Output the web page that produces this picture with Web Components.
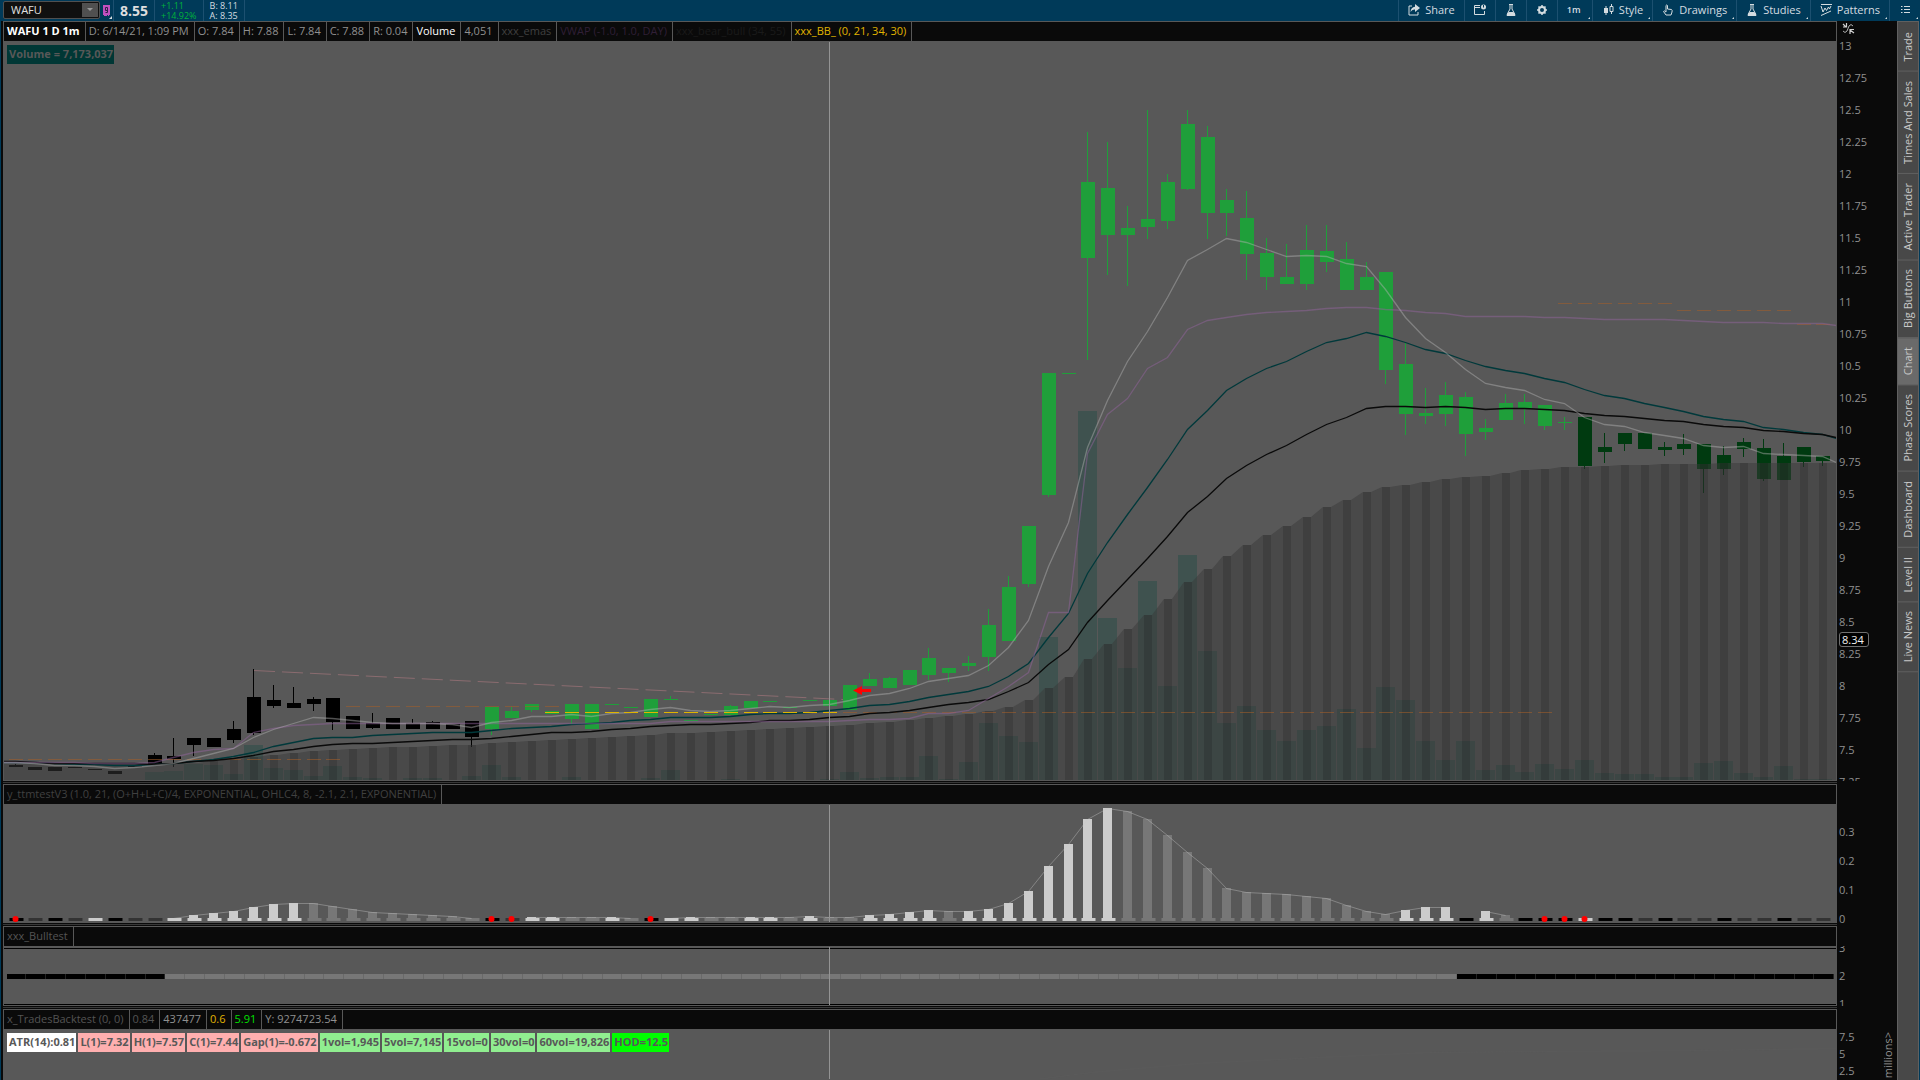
<!DOCTYPE html>
<html lang="en">
<head>
<meta charset="utf-8">
<title>WAFU - Charts</title>
<style>
    :root {
        --navy: #003a59;
        --line: #585858;
        --ink: #0a0a0a;
        --dim: #909090;
    }

    body {
        margin: 0;
        height: 100vh;
        overflow: hidden;
        background: var(--navy);
        font: 11px/18px "Open Sans", "Noto Sans", sans-serif;
        color: var(--dim);
    }
</style>
</head>
<body>
<chart-app></chart-app>

<script>
const BAR_COUNT = 92;
const BAR_STEP = 19.868;
const bodyX = (i) => Math.floor(9 + BAR_STEP * i);
const midX = (i) => bodyX(i) + 6.5;

// one row per bar: high, body top, body bottom, low
const candles = `764 765 767 767|767 767 770 770|767 767 771 771|767 767 768 768|769 769 770 770|771 771 774 774|766 766 767 767
753 755 764 764|738 756 759 767|738 738 745 756|738 738 747 747|721 729 740 743|669 697 733 735|685 700 706 708|687 703 708 708
697 699 704 711|698 698 722 730|716 716 729 729|713 723 728 729|718 718 729 729|719 723 729 729|721 722 729 729|724 724 729 729
721 721 737 747|707 707 729 735|707 711 718 718|704 704 710 712|711 711 714 714|704 704 719 724|704 704 729 729|704 704 705 705
707 707 708 708|699 699 717 717|696 699 700 700|720 720 721 721|714 714 715 715|705 706 715 715|701 701 708 708|701 701 702 702
707 707 708 708|700 700 701 701|700 700 706 706|685 685 710 710|673 679 686 686|677 678 688 688|670 670 685 685|648 658 675 680
668 668 673 682|656 663 666 671|609 625 657 671|576 587 641 641|526 526 584 587|373 373 495 497|373 373 374 374|132 182 258 360
142 188 235 275|206 228 235 286|110 219 227 239|174 182 221 229|110 124 189 190|126 137 213 239|189 200 213 236|191 218 254 280
238 253 277 290|244 277 284 284|225 250 284 290|225 251 262 272|242 259 290 290|262 277 290 290|272 272 370 384|343 364 414 435
388 413 416 424|382 395 414 426|392 397 434 456|419 428 432 440|394 403 420 420|394 402 408 424|405 405 426 430|417 422 423 430
417 417 466 469|433 447 452 463|433 433 444 451|433 433 449 449|442 447 450 456|434 444 449 455|444 444 469 493|446 455 469 475
438 442 449 457|439 448 479 481|443 456 480 480|447 447 462 467|456 456 461 466`
    .split(/[|\n]/).map((row) => row.trim().split(' ').map(Number));

// the last value of each average is its point on the right edge
const averages = [
    { color: '#00393b', points: [762,762,763,764,764,765,765,764,763,761,759,756,752,746,742,738,737,737,735,734,733,732,732,732,730,728,727,726,724,723,722,720,719,717,717,717,716,714,713,713,712,710,708,705,704,701,697,694,691,686,676,663,637,613,573,542,514,487,459,429,410,390,378,368,361,351,342,338,332,336,342,349,353,360,366,370,373,378,382,389,395,398,403,407,411,416,419,421,427,429,432,434,438] },
    { color: '#0a0a0a', points: [761,762,763,763,763,763,763,764,763,761,760,758,755,751,749,746,744,743,743,742,741,740,739,739,738,736,734,732,732,731,729,728,726,725,724,724,723,722,720,720,719,717,716,713,712,710,707,704,702,699,691,682,664,649,622,600,579,558,536,512,496,478,465,454,445,434,424,417,408,406,406,407,406,407,409,408,408,409,410,413,415,416,418,420,421,424,426,427,430,431,433,434,437] },
    { color: 'rgba(145,100,155,.5)', points: [762,762,762,762,763,763,763,762,757,752,749,748,732,728,725,724,723,723,723,723,723,723,723,723,723,723,723,723,723,723,723,723,723,721,721,721,721,721,721,721,721,721,720,719,719,718,713,713,710,698,686,672,612,612,453,414,398,368,357,329,320,317,314,312,311,310,308,307,307,309,310,312,313,316,316,316,316,317,317,318,319,319,319,319,320,321,322,322,322,323,323,323,325] },
    { color: 'rgba(180,180,180,.45)', points: [762,763,765,765,766,768,767,765,763,758,753,748,737,729,723,717,718,720,722,723,723,723,724,727,722,720,716,716,714,716,713,712,709,707,710,711,710,708,706,707,705,704,700,695,693,688,681,678,675,665,647,620,566,522,447,400,361,331,297,260,249,238,242,249,256,255,256,263,266,289,317,338,352,369,383,387,390,399,403,417,424,426,432,435,438,445,447,446,453,454,455,456,462] }
];

const cloud = [764,764,764,764,764,764,764,764,763,763,761,759,757,755,753,751,750,749,748,747,747,746,745,745,743,742,741,740,739,738,737,736,735,733,733,732,731,730,729,728,727,726,725,723,722,720,718,716,714,711,707,700,688,677,659,644,629,615,599,582,569,556,545,535,526,517,507,500,492,487,485,482,479,477,476,473,470,469,467,467,466,465,465,464,464,464,463,463,463,463,463,463];

const volume = [0,0,0,0,0,0,0,772,771,764,765,774,745,768,770,776,766,777,778,0,778,778,0,776,765,777,0,0,777,0,0,0,778,770,0,0,779,0,0,0,0,779,772,778,777,777,756,779,762,723,736,742,637,0,411,618,668,581,686,555,651,723,706,730,741,730,726,709,748,687,700,741,760,741,770,765,772,764,769,760,773,774,774,777,777,763,761,773,777,766,779,779];

// w rising, g fading, k and d squeeze marks; 918 is the zero line
const squeezeMarks = 'kdkdwkddwwwwwwwgggggggggkdwwggwgkwwggwwgwggwwwwgwwwwwwwwggggggggggggggwwwkwgkkkwkkdkddkddkdd';
const squeeze = [918,918,918,918,918,918,918,918,918,915,913,911,907,904,903,903,906,909,912,913,914,915,916,918,918,918,917,917,917,917,917,918,918,918,917,917,917,917,917,917,916,917,917,915,914,912,910,911,911,909,903,891,866,844,819,808,811,819,835,852,868,888,892,893,894,896,898,905,911,914,910,907,907,918,911,915,918,918,918,918,918,918,918,918,918,918,918,918,918,918,918,918];
const squeezeColors = { w: '#cccccc', g: '#777777', k: '#000000', d: '#333333' };
const alerts = [0, 24, 25, 32, 77, 78, 79];

const rect = (x, y, w, h, fill) => `<rect x="${x}" y="${y}" width="${w}" height="${h}" fill="${fill}"/>`;

function candleColor(i) {
    if (i < 24) return '#000000';
    return i < 79 ? '#1f9f3a' : '#003a10';
}

function drawCandles() {
    return candles.map(([high, top, bottom, low], i) =>
        rect(bodyX(i), top, 14, bottom - top, candleColor(i)) +
        rect(bodyX(i) + 6, high, 1, low - high, candleColor(i))).join('');
}

function drawAverage({ color, points }) {
    const path = points.map((y, i) => `${i < BAR_COUNT ? midX(i) : 1836},${y + 0.5}`);
    path.unshift(`4,${points[0] + 0.5}`);
    return `<polyline points="${path.join(' ')}" fill="none" stroke="${color}" stroke-width="1.3"/>`;
}

function drawDashes(from, to, y, color) {
    let out = '';
    for (let i = from; i <= to; i++) out += rect(bodyX(i), y, 14, 1, color);
    return out;
}

function drawCloud() {
    let steps = `M4 780V${cloud[0]}`;
    cloud.forEach((y, i) => { steps += `L${bodyX(i) + 3} ${y}h8`; });
    return `<path d="${steps}H1836V780Z" fill="#3a3a3a" fill-opacity=".5"/>`;
}

const svgStyle = `
    <style>
        :host { display: block; min-height: 0; height: 100%; }
        svg { display: block; width: 100%; height: 100%; }
    </style>`;

class PricePlot extends HTMLElement {
    constructor() {
        super();
        this.attachShadow({ mode: 'open' });
    }

    connectedCallback() {
        const orange = 'rgba(165,95,40,.55)';
        const bars = volume.map((y, i) => y ? rect(bodyX(i) - 3, y, 19, 780 - y, 'rgba(8,70,58,.3)') : '').join('');
        const strips = cloud.map((y, i) => i > 9 ? rect(bodyX(i) + 3, y, 8, 780 - y, 'rgba(0,0,0,.13)') : '').join('');
        this.shadowRoot.innerHTML = `${svgStyle}
            <svg viewBox="4 41 1832 739" preserveAspectRatio="none" role="img" aria-label="Price chart">
                <g shape-rendering="crispEdges">${drawCandles()}${bars}</g>
                ${drawCloud()}
                <g shape-rendering="crispEdges">${strips}
                    ${drawDashes(0, 16, 759, orange)}
                    ${drawDashes(17, 27, 706, orange)}
                    ${drawDashes(42, 77, 712, orange)}
                    ${drawDashes(78, 83, 303, orange)}
                    ${drawDashes(84, 89, 310, orange)}
                    ${drawDashes(90, 91, 324, orange)}
                </g>
                ${averages.map(drawAverage).join('')}
                <g shape-rendering="crispEdges">${drawDashes(27, 41, 712, '#e0b400')}</g>
                <path d="M254 670.5L843 699.5" stroke="rgba(200,130,140,.45)" stroke-dasharray="21 7"/>
                <path d="M829.5 42V780" stroke="#949494"/>
                <path d="M853 690.5L862 686V689H871V692H862V695Z" fill="#ff0000"/>
            </svg>`;
    }
}

class SqueezePlot extends HTMLElement {
    constructor() {
        super();
        this.attachShadow({ mode: 'open' });
    }

    connectedCallback() {
        const bars = squeeze.map((y, i) => {
            const color = squeezeColors[squeezeMarks[i]];
            return `<g fill-opacity=".5">${rect(bodyX(i), 918, 15, 3, color)}</g>` +
                rect(bodyX(i) + 1, 918, 13, 3, color) +
                rect(bodyX(i) + 2, y, 9, 918 - y, color);
        }).join('');
        const lines = [[8, 23], [26, 31], [33, 72], [74, 75]].map(([from, to]) => {
            const path = squeeze.slice(from, to + 1).map((y, n) => `${midX(from + n)},${y + 0.5}`);
            return `<polyline points="${path.join(' ')}" fill="none" stroke="#c8c8c8" stroke-opacity=".4"/>`;
        }).join('');
        const dots = alerts.map((i) => `<circle cx="${midX(i)}" cy="919" r="3" fill="#ff0000"/>`).join('');
        this.shadowRoot.innerHTML = `${svgStyle}
            <svg viewBox="4 804 1832 118" preserveAspectRatio="none" role="img" aria-label="Squeeze histogram">
                <g shape-rendering="crispEdges">${bars}</g>${lines}${dots}
                <path d="M829.5 805V922" stroke="#949494"/>
            </svg>`;
    }
}

class TrendPlot extends HTMLElement {
    constructor() {
        super();
        this.attachShadow({ mode: 'open' });
    }

    connectedCallback() {
        let cells = '';
        for (let i = 0; i < BAR_COUNT; i++) {
            const off = i < 8 || i > 72;
            const x = bodyX(i) - 2;
            const width = Math.min(bodyX(i + 1) - 2, 1835) - x;
            cells += rect(x, 974, width, 5, off ? '#000000' : '#777777') +
                rect(x + width - 1, 974, 1, 5, off ? '#222222' : '#696969');
        }
        this.shadowRoot.innerHTML = `${svgStyle}
            <svg viewBox="4 946 1832 59" preserveAspectRatio="none" role="img" aria-label="Trend band">
                <g shape-rendering="crispEdges">
                    ${rect(4, 948, 1832, 1, '#000000')}${rect(4, 1004, 1832, 1, '#000000')}${cells}
                </g>
                <path d="M829.5 947V1005" stroke="#949494"/>
            </svg>`;
    }
}

class BacktestPlot extends HTMLElement {
    constructor() {
        super();
        this.attachShadow({ mode: 'open' });
    }

    connectedCallback() {
        this.shadowRoot.innerHTML = `${svgStyle}
            <svg viewBox="4 1029 1832 51" preserveAspectRatio="none" role="img" aria-label="Backtest result">
                <path d="M1040 1080L1095 1073L1200 1064L1320 1058L1430 1053L1545 1052L1690 1051L1836 1049" fill="none" stroke="#5a5a5a"/>
                <path d="M829.5 1030V1080" stroke="#949494"/>
            </svg>`;
    }
}

class ChartPanel extends HTMLElement {
    constructor() {
        super();
        this.attachShadow({ mode: 'open' }).innerHTML = `
            <style>
                :host {
                    display: grid;
                    grid-template-columns: minmax(0, 1fr) 60px;
                    min-height: 0;
                }

                .frame {
                    display: flex;
                    flex-direction: column;
                    min-height: 0;
                    border: 1px solid var(--line);
                    background: #585858;
                }

                header {
                    display: flex;
                    flex: none;
                    height: 19px;
                    background: var(--ink);
                }

                .pane {
                    position: relative;
                    flex: 1;
                    min-height: 0;
                }

                .axis {
                    position: relative;
                    min-height: 0;
                    overflow: hidden;
                    background: var(--ink);
                }
            </style>
            <section class="frame">
                <header><slot name="head"></slot></header>
                <div class="pane"><slot></slot></div>
            </section>
            <div class="axis"><slot name="axis"></slot></div>`;
    }
}

class HeadCell extends HTMLElement {
    constructor() {
        super();
        this.attachShadow({ mode: 'open' }).innerHTML = `
            <style>
                :host {
                    flex: none;
                    padding: 0 5px 0 3px;
                    border-right: 1px solid var(--line);
                    white-space: nowrap;
                    line-height: 17px;
                }
            </style>
            <slot></slot>`;
    }
}

class AxisScale extends HTMLElement {
    constructor() {
        super();
        this.attachShadow({ mode: 'open' });
    }

    connectedCallback() {
        const labels = this.getAttribute('labels').split(' ');
        const step = this.getAttribute('step');
        this.shadowRoot.innerHTML = `
            <style>
                :host { display: block; padding-left: 2px; }
                div { height: ${step}px; line-height: ${step}px; }
            </style>
            ${labels.map((label) => `<div>${label}</div>`).join('')}`;
    }
}

class LabelRow extends HTMLElement {
    constructor() {
        super();
        this.attachShadow({ mode: 'open' }).innerHTML = `
            <style>
                :host {
                    position: absolute;
                    top: 4px;
                    left: 3px;
                    display: flex;
                    gap: 2px;
                    color: #585858;
                    font-weight: 700;
                }

                ::slotted(span) {
                    padding: 0 1px 2px 2px;
                    line-height: 17px;
                    white-space: nowrap;
                }
            </style>
            <slot></slot>`;
    }
}

class ToolItem extends HTMLElement {
    constructor() {
        super();
        this.attachShadow({ mode: 'open' });
    }

    connectedCallback() {
        const name = this.getAttribute('name');
        this.shadowRoot.innerHTML = `
            <style>
                :host {
                    position: relative;
                    display: flex;
                    flex: none;
                    border-left: 1px solid #1c5070;
                }

                button {
                    display: flex;
                    align-items: center;
                    justify-content: center;
                    gap: 5px;
                    padding: 0 9px 1px;
                    border: 0;
                    background: none;
                    color: #d4dce0;
                    font: inherit;
                }

                ::slotted(svg) { display: block; width: 12px; height: 12px; }

                :host([menu])::after {
                    content: '';
                    position: absolute;
                    right: 2px;
                    bottom: 2px;
                    border: 1px solid #d4dce0;
                    border-top-color: transparent;
                    border-left-color: transparent;
                }
            </style>
            <button type="button" aria-label="${name}"><slot></slot></button>`;
    }
}

class TopBar extends HTMLElement {
    constructor() {
        super();
        this.attachShadow({ mode: 'open' });
    }

    connectedCallback() {
        this.shadowRoot.innerHTML = `
            <style>
                :host {
                    display: flex;
                    height: 21px;
                    background: var(--navy);
                    color: #d4dce0;
                }

                .symbol {
                    display: flex;
                    box-sizing: border-box;
                    width: 97px;
                    height: 18px;
                    margin: 1px 3px 0 3px;
                    border: 1px solid #505050;
                    border-radius: 2px;
                    background: #101010;
                }

                .symbol input {
                    flex: 1;
                    min-width: 0;
                    padding: 0 0 0 7px;
                    border: 0;
                    background: none;
                    color: #e0e0e0;
                    font: inherit;
                }

                .symbol button {
                    display: grid;
                    place-items: center;
                    width: 16px;
                    margin: 1px;
                    padding: 0;
                    border: 0;
                    background: #505050;
                }

                .link {
                    position: relative;
                    width: 10px;
                    padding: 3px 0 0;
                    border: 0;
                    background: none;
                    text-align: left;
                }

                .link svg { display: block; }

                .quote {
                    display: flex;
                    flex-direction: column;
                    justify-content: center;
                    padding: 0 6px;
                    border-left: 1px solid #1c5070;
                    white-space: nowrap;
                }

                .last { color: #dedede; font-size: 14px; font-weight: 700; line-height: 21px; }
                .small { font-size: 9px; line-height: 10px; }
                .up { color: #00b23c; }
                .book { border-right: 1px solid #1c5070; }
                .tools { display: flex; margin-left: auto; }
            </style>
            <div class="symbol">
                <input aria-label="Symbol" value="WAFU">
                <button type="button" aria-label="Symbol list"><svg width="6" height="4"><path d="M0 0H6L3 3Z" fill="#999"/></svg></button>
            </div>
            <button class="link" type="button" aria-label="Linked group">
                <svg width="10" height="16" viewBox="0 0 10 16">
                    <path d="M0 1H7V11H6V12H5V11H4V12H1V11H0Z" fill="#c050c0"/>
                    <path d="M4.500 6.500H2.500V3.500H4.500V8.500H2.500" fill="none" stroke="#30204a"/>
                    <path d="M9 12V15H6Z" fill="#d4dce0"/>
                </svg>
            </button>
            <div class="quote last">8.55</div>
            <div class="quote small up"><span>+1.11</span><span>+14.92%</span></div>
            <div class="quote small book"><span>B: 8.11</span><span>A: 8.35</span></div>
            <nav class="tools" aria-label="Chart tools">
                <tool-item name="Share">
                    <svg viewBox="0 0 12 12"><path d="M4 2H1V11H10V8" fill="none" stroke="#d4dce0"/><path d="M7 0L12 4L7 8V5.500Q4 5 2.500 8Q3 3 7 2.700Z" fill="#d4dce0"/></svg>Share
                </tool-item>
                <tool-item name="Detach">
                    <svg viewBox="0 0 12 12"><path d="M6 1.500H.5V10.500H10.500V7M.5 3.500H6" fill="none" stroke="#d4dce0"/><circle cx="9.500" cy="3" r="2.500" fill="#d4dce0"/><path d="M9.500 1V3.500" stroke="#003a59"/></svg>
                </tool-item>
                <tool-item name="Edit studies">
                    <svg viewBox="0 0 12 12"><path d="M4 .5H8M5 1V5L2 10.500H10L7 5V1" fill="none" stroke="#d4dce0"/><path d="M3.500 8H8.500L10.500 12H1.500Z" fill="#d4dce0"/></svg>
                </tool-item>
                <tool-item name="Settings">
                    <svg viewBox="0 0 12 12"><circle cx="6" cy="6" r="3" fill="none" stroke="#d4dce0" stroke-width="2"/><path d="M6 1V3M6 9V11M1 6H3M9 6H11M2.500 2.500L4 4M8 8L9.500 9.500M9.500 2.500L8 4M4 8L2.500 9.500" stroke="#d4dce0" stroke-width="1.500"/></svg>
                </tool-item>
                <tool-item name="Time frame" menu style="font-size: 9px; font-weight: 600">1m&nbsp;</tool-item>
                <tool-item name="Style" menu>
                    <svg viewBox="0 0 12 12"><path d="M2 4H6V9H2Z" fill="#d4dce0"/><path d="M4 2V11M9.500 0V2M9.500 8V10M8 2.500H11V7.500H8Z" fill="none" stroke="#d4dce0"/></svg>Style
                </tool-item>
                <tool-item name="Drawings" menu>
                    <svg viewBox="0 0 12 12"><path d="M4 8V1.500Q4.500 .5 5.500 1.500V5L9.500 5.500Q10.500 6 10 8L9 11H4L1.500 7.500Q2 6 4 8" fill="none" stroke="#d4dce0"/></svg>Drawings
                </tool-item>
                <tool-item name="Studies" menu>
                    <svg viewBox="0 0 12 12"><path d="M4 .5H8M5 1V5L2 10.500H10L7 5V1" fill="none" stroke="#d4dce0"/><path d="M3.500 8H8.500L10.500 12H1.500Z" fill="#d4dce0"/></svg>Studies
                </tool-item>
                <tool-item name="Patterns" menu>
                    <svg viewBox="0 0 12 12"><path d="M1 .5H12M1 11.500L11 7M1 2L3 8L5 4L6.500 6.500L8.500 3L9.500 5L11 2" fill="none" stroke="#d4dce0"/></svg>Patterns
                </tool-item>
                <tool-item name="More" menu>
                    <svg viewBox="0 0 12 12"><path d="M2 2.500H3.500M2 5.500H3.500M2 8.500H3.500M5 2.500H11M5 5.500H11M5 8.500H11" stroke="#d4dce0"/></svg>
                </tool-item>
            </nav>`;
    }
}

class SideTabs extends HTMLElement {
    constructor() {
        super();
        this.attachShadow({ mode: 'open' });
    }

    connectedCallback() {
        const tabs = ['Trade', 'Times And Sales', 'Active Trader', 'Big Buttons', 'Chart', 'Phase Scores', 'Dashboard', 'Level II', 'Live News'];
        this.shadowRoot.innerHTML = `
            <style>
                :host {
                    display: flex;
                    flex-direction: column;
                    box-sizing: border-box;
                    width: 22px;
                    padding-top: 1px;
                    border: 1px solid #606060;
                    border-bottom: 0;
                    background: #484848;
                }

                button {
                    flex: none;
                    width: 20px;
                    padding: 9px 0;
                    border: 0;
                    border-top: 1px solid #606060;
                    background: none;
                    color: #c8c8c8;
                    font: inherit;
                    line-height: 20px;
                    writing-mode: vertical-rl;
                    transform: rotate(180deg);
                }

                button[aria-pressed=true] { background: #6a6a6a; }
            </style>
            ${tabs.map((tab) => `<button type="button" aria-pressed="${tab === 'Chart'}">${tab}</button>`).join('')}`;
    }
}

class ChartApp extends HTMLElement {
    constructor() {
        super();
        this.attachShadow({ mode: 'open' });
    }

    connectedCallback() {
        this.shadowRoot.innerHTML = `
            <style>
                :host { display: flex; flex-direction: column; height: 100vh; }

                .work {
                    display: flex;
                    flex: 1;
                    min-height: 0;
                    padding: 0 1px;
                }

                main {
                    display: flex;
                    flex: 1;
                    flex-direction: column;
                    gap: 3px;
                    min-width: 0;
                    padding-left: 2px;
                    background: var(--ink);
                }

                .price { flex: 1; }
                .squeeze { flex: 0 0 139px; }
                .trend { flex: 0 0 80px; }
                .backtest { flex: 0 0 71px; }

                /* the pale thread in the gap between two panels */
                chart-panel + chart-panel { position: relative; }

                chart-panel + chart-panel::before {
                    content: '';
                    position: absolute;
                    top: -2px;
                    left: 0;
                    right: 60px;
                    height: 1px;
                    background: #383838;
                }

                .collapse { display: block; margin: 1px 0 -5px 5px; }
                .squeeze axis-scale { padding-top: 33px; }
                .trend .clip { margin-top: 20px; overflow: hidden; }
                .trend axis-scale { margin-top: -12px; }
                .backtest axis-scale { padding-top: 19px; }

                .now {
                    position: absolute;
                    top: 611px;
                    left: 2px;
                    padding: 0 4px 0 2px;
                    border: 1px solid #707070;
                    border-radius: 3px;
                    background: #000;
                    color: #f0f0f0;
                    line-height: 13px;
                }

                .unit {
                    position: absolute;
                    top: 23px;
                    right: 0;
                    writing-mode: vertical-rl;
                    transform: rotate(180deg);
                    line-height: 18px;
                }

                .symbol { color: #fff; font-weight: 700; }
                .white { color: #fff; }
                .faint { color: #404040; }
                .faded { color: #545454; }
                .purple { color: #301f36; }
                .ghost { color: #1a1a1a; }
                .gold { color: #e0b400; }
                .lime { color: #00e000; }
                .teal { background: #003735; }
                .plain { background: #fff; }
                .pink { background: #ffafaf; }
                .green { background: #90ee90; }
                .bright { background: #0f0; }
            </style>
            <top-bar></top-bar>
            <div class="work">
                <main>
                    <chart-panel class="price">
                        <head-cell slot="head" class="symbol">WAFU 1 D 1m</head-cell>
                        <head-cell slot="head">D: 6/14/21, 1:09 PM</head-cell>
                        <head-cell slot="head">O: 7.84</head-cell>
                        <head-cell slot="head">H: 7.88</head-cell>
                        <head-cell slot="head">L: 7.84</head-cell>
                        <head-cell slot="head">C: 7.88</head-cell>
                        <head-cell slot="head">R: 0.04</head-cell>
                        <head-cell slot="head" class="white">Volume</head-cell>
                        <head-cell slot="head">4,051</head-cell>
                        <head-cell slot="head" class="faint">xxx_emas</head-cell>
                        <head-cell slot="head" class="purple">VWAP (-1.0, 1.0, DAY)</head-cell>
                        <head-cell slot="head" class="ghost">xxx_bear_bull (34, 55)</head-cell>
                        <head-cell slot="head" class="gold">xxx_BB_ (0, 21, 34, 30)</head-cell>
                        <price-plot></price-plot>
                        <label-row><span class="teal">Volume = 7,173,037</span></label-row>
                        <svg slot="axis" class="collapse" width="13" height="13" viewBox="0 0 13 13">
                            <path d="M1 2L4 5M4.500 1V5H1M12 11L8 8M12 7.500H8V12" fill="none" stroke="#d0d0d0" stroke-width="1.200"/>
                            <path d="M1 9Q3 12 5 9L7 4Q9 1 11 4" fill="none" stroke="#b0b0b0"/>
                        </svg>
                        <axis-scale slot="axis" step="32" labels="13 12.75 12.5 12.25 12 11.75 11.5 11.25 11 10.75 10.5 10.25 10 9.75 9.5 9.25 9 8.75 8.5 8.25 8 7.75 7.5 7.25"></axis-scale>
                        <span slot="axis" class="now">8.34</span>
                    </chart-panel>
                    <chart-panel class="squeeze">
                        <head-cell slot="head" class="faint">y_ttmtestV3 (1.0, 21, (O+H+L+C)/4, EXPONENTIAL, OHLC4, 8, -2.1, 2.1, EXPONENTIAL)</head-cell>
                        <squeeze-plot></squeeze-plot>
                        <axis-scale slot="axis" step="29" labels="0.3 0.2 0.1 0"></axis-scale>
                    </chart-panel>
                    <chart-panel class="trend">
                        <head-cell slot="head" class="faded">xxx_Bulltest</head-cell>
                        <trend-plot></trend-plot>
                        <div slot="axis" class="clip"><axis-scale step="28" labels="3 2 1"></axis-scale></div>
                    </chart-panel>
                    <chart-panel class="backtest">
                        <head-cell slot="head" class="faded">x_TradesBacktest (0, 0)</head-cell>
                        <head-cell slot="head" class="faded">0.84</head-cell>
                        <head-cell slot="head">437477</head-cell>
                        <head-cell slot="head" class="gold">0.6</head-cell>
                        <head-cell slot="head" class="lime">5.91</head-cell>
                        <head-cell slot="head">Y: 9274723.54</head-cell>
                        <backtest-plot></backtest-plot>
                        <label-row>
                            <span class="plain">ATR(14):0.81</span>
                            <span class="pink">L(1)=7.32</span>
                            <span class="pink">H(1)=7.57</span>
                            <span class="pink">C(1)=7.44</span>
                            <span class="pink">Gap(1)=-0.672</span>
                            <span class="green">1vol=1,945</span>
                            <span class="green">5vol=7,145</span>
                            <span class="green">15vol=0</span>
                            <span class="green">30vol=0</span>
                            <span class="green">60vol=19,826</span>
                            <span class="bright">HOD=12.5</span>
                        </label-row>
                        <axis-scale slot="axis" step="17" labels="7.5 5 2.5"></axis-scale>
                        <span slot="axis" class="unit">millions&gt;</span>
                    </chart-panel>
                </main>
                <side-tabs></side-tabs>
            </div>`;
    }
}

customElements.define('price-plot', PricePlot);
customElements.define('squeeze-plot', SqueezePlot);
customElements.define('trend-plot', TrendPlot);
customElements.define('backtest-plot', BacktestPlot);
customElements.define('chart-panel', ChartPanel);
customElements.define('head-cell', HeadCell);
customElements.define('axis-scale', AxisScale);
customElements.define('label-row', LabelRow);
customElements.define('tool-item', ToolItem);
customElements.define('top-bar', TopBar);
customElements.define('side-tabs', SideTabs);
customElements.define('chart-app', ChartApp);
</script>
</body>
</html>
